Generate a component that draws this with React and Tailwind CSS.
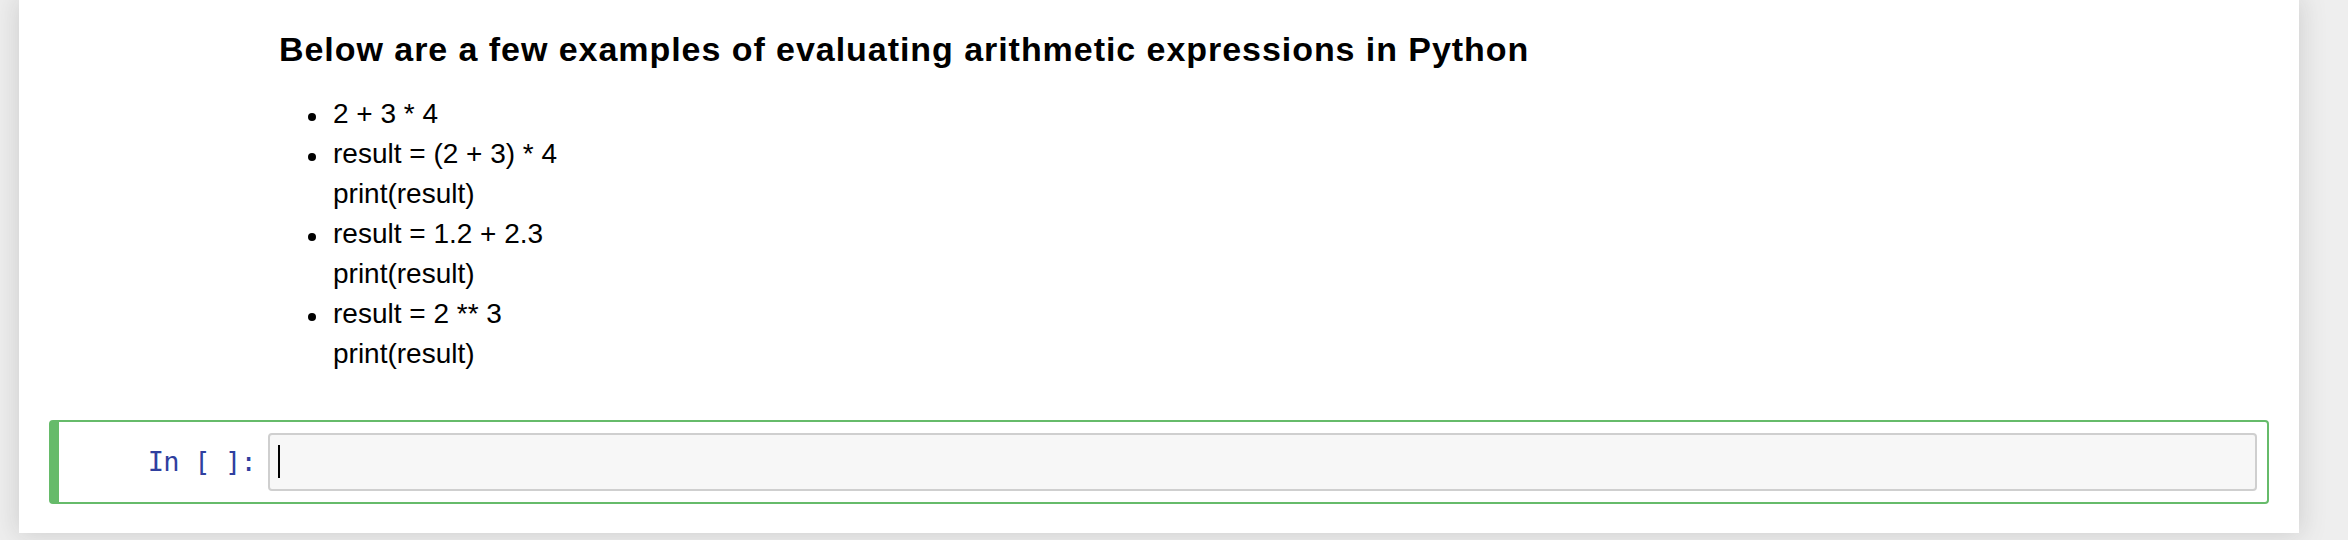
import React from 'react';

const examples = [
  ['2 + 3 * 4'],
  ['result = (2 + 3) * 4', 'print(result)'],
  ['result = 1.2 + 2.3', 'print(result)'],
  ['result = 2 ** 3', 'print(result)'],
];

const Bullet = ({ lines }) => (
  <li className="flex">
    <div className="h-[40px] w-[54px] shrink-0">
      <span className="ml-[29px] mt-[19px] block h-[8px] w-[8px] rounded-full bg-black" />
    </div>
    <div>
      {lines.map((line) => (
        <p key={line} className="h-[40px] whitespace-pre leading-[40px]">{line}</p>
      ))}
    </div>
  </li>
);

const App = () => {
  return (
    <div className="h-[540px] w-[2348px] overflow-hidden bg-[#eeeeee] pl-[19px]">
      <div className="h-[533px] w-[2280px] bg-white px-[30px] shadow-[0_0_24px_2px_rgba(87,87,87,0.2)]">
        {/* markdown cell */}
        <div className="pl-[230px] pt-[29px] font-['Liberation_Sans',Arial,sans-serif] text-black">
          <h3 className="h-[40px] whitespace-nowrap text-[34px] font-bold leading-[40px] tracking-[0.95px]">
            Below are a few examples of evaluating arithmetic expressions in Python
          </h3>
          <ul className="mt-[25px] text-[28px]">
            {examples.map((lines) => (
              <Bullet key={lines[0]} lines={lines} />
            ))}
          </ul>
        </div>

        {/* code cell, edit mode */}
        <div className="mt-[46px] flex h-[84px] rounded-[4px] border-2 border-l-[10px] border-[#66bb6a] px-[10px] py-[11px]">
          <div className="h-[58px] w-[199px] shrink-0 pr-[12px] text-right font-['DejaVu_Sans_Mono',monospace] text-[27px] leading-[58px] tracking-[-0.8px] text-[#303f9f]">
            In [ ]:
          </div>
          <div className="flex h-[58px] flex-1 items-start rounded-[4px] border-2 border-[#cfcfcf] bg-[#f7f7f7] pl-[8px] pt-[10px]">
            <span className="block h-[33px] w-[2px] bg-black" />
          </div>
        </div>
      </div>
    </div>
  );
};

export default App;
